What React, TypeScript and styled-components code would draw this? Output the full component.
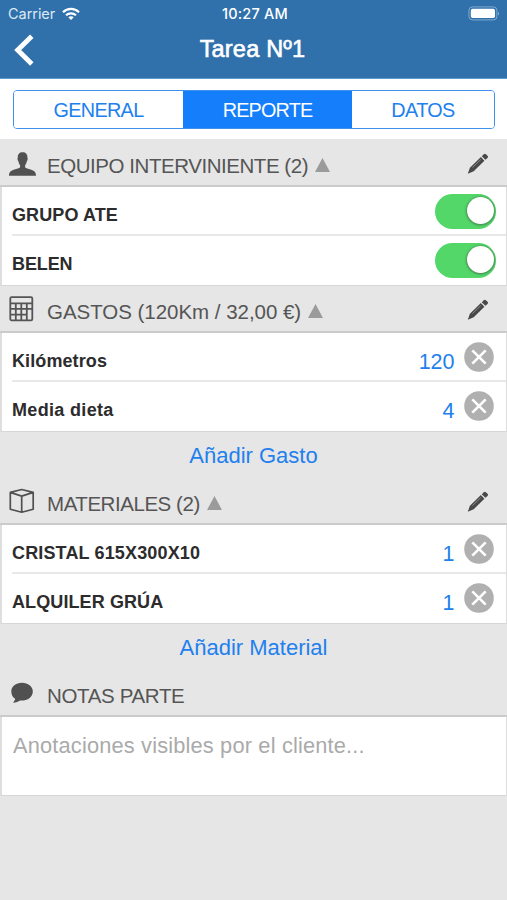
import React from "react";
import styled, { createGlobalStyle } from "styled-components";

const GlobalStyle = createGlobalStyle`
  *, *::before, *::after { box-sizing: border-box; }
  html, body { margin: 0; padding: 0; background: #e6e6e6; }
  body { font-family: "Liberation Sans", Arial, sans-serif; }
  button { border: 0; background: none; padding: 0; font: inherit; color: inherit; }
`;

const Screen = styled.main`
  width: 507px;
  height: 900px;
  overflow: hidden;
  display: flex;
  flex-direction: column;
  background: #e6e6e6;
`;

const Header = styled.header`
  height: 79px;
  flex: none;
  background: #3071ac;
  border-bottom: 1px solid #5e9bd0;
  color: #fff;
`;

const StatusBar = styled.div`
  height: 27px;
  padding: 0 7px 0 8px;
  display: grid;
  grid-template-columns: 1fr auto 1fr;
  align-items: center;
  font-family: Inter, sans-serif;
  font-size: 14.5px;
  line-height: 27px;
`;

const Carrier = styled.div`
  display: flex;
  align-items: center;
  gap: 7px;
  color: #dce9f5;
  letter-spacing: -0.05px;
`;

const Clock = styled.div`
  font-weight: 500;
  letter-spacing: 0.2px;
  padding-left: 2px;
`;

const BatterySlot = styled.div`
  display: flex;
  justify-content: flex-end;
`;

const NavBar = styled.div`
  height: 51px;
  padding: 0 14px;
  display: grid;
  grid-template-columns: 40px 1fr 40px;
  align-items: start;
`;

const BackButton = styled.button`
  display: flex;
  padding-top: 7px;
`;

const Title = styled.h1`
  margin: 0;
  padding-right: 2px;
  text-align: center;
  font-size: 23.5px;
  font-weight: 400;
  line-height: 45px;
  letter-spacing: 0.2px;
  -webkit-text-stroke: 0.6px #fff;
`;

const TabArea = styled.div`
  height: 60px;
  flex: none;
  padding: 11px 12px 0 13px;
  background: #fff;
`;

const Tabs = styled.nav`
  height: 39px;
  display: grid;
  grid-template-columns: 169px 169px 1fr;
  border: 1px solid #3e92ee;
  border-radius: 4px;
  overflow: hidden;
`;

const Tab = styled.button<{ $active?: boolean; $spacing: number }>`
  color: ${(p) => (p.$active ? "#fff" : "#2180ee")};
  background: ${(p) => (p.$active ? "#147efb" : "#fff")};
  font-size: 19.8px;
  line-height: 38px;
  letter-spacing: ${(p) => p.$spacing}px;
`;

const SectionHead = styled.div<{ $height: number }>`
  height: ${(p) => p.$height}px;
  flex: none;
  padding: 0 18px 4px 9px;
  display: flex;
  align-items: flex-end;
  border-bottom: 2px solid #cbcbcb;
  color: #555;
`;

const HeadIcon = styled.span`
  width: 38px;
  height: 36px;
  flex: none;
`;

const SectionTitle = styled.h2<{ $spacing: number }>`
  margin: 0;
  height: 36px;
  font-size: 20.5px;
  font-weight: 400;
  line-height: 42px;
  white-space: nowrap;
  letter-spacing: ${(p) => p.$spacing}px;
`;

const Caret = styled.svg`
  width: 15px;
  height: 36px;
  margin-left: 7px;
`;

const EditButton = styled.button`
  margin-left: auto;
  height: 36px;
`;

const List = styled.ul`
  margin: 0;
  padding: 0 0 0 10px;
  list-style: none;
  flex: none;
  background: #fff;
  border-left: 2px solid #dedede;
  border-right: 1px solid #dedede;
  border-bottom: 1px solid #d6d6d6;
`;

const Row = styled.li`
  height: 49px;
  padding-right: 10px;
  display: flex;
  align-items: flex-start;
  border-bottom: 2px solid #e8e8e8;
  &:last-child { border-bottom: 0; }
`;

const RowLabel = styled.span<{ $spacing: number }>`
  flex: 1;
  color: #2c2c2c;
  font-size: 18px;
  font-weight: 700;
  line-height: 56px;
  letter-spacing: ${(p) => p.$spacing}px;
`;

const Amount = styled.span`
  color: #2180ee;
  font-size: 21.5px;
  line-height: 58px;
  margin-right: 9px;
`;

const Toggle = styled.button`
  width: 61px;
  height: 35px;
  margin: 7px 0 0;
  padding: 3px 2.5px 0;
  display: flex;
  justify-content: flex-end;
  border-radius: 18px;
  background: #53d769;
`;

const Knob = styled.span`
  width: 27px;
  height: 27px;
  border-radius: 50%;
  background: #fff;
  box-shadow: 0 0.5px 2px 1px rgba(60, 90, 65, 0.55);
`;

const RemoveButton = styled.button`
  display: flex;
  margin: 9px 2.5px 0 0;
`;

const AddButton = styled.button<{ $spacing: number }>`
  height: 47px;
  flex: none;
  color: #2180ee;
  font-size: 22px;
  line-height: 47px;
  letter-spacing: ${(p) => p.$spacing}px;
`;

const Notes = styled.div`
  height: 79px;
  flex: none;
  padding-left: 11px;
  background: #fff;
  border-left: 2px solid #dedede;
  border-right: 1px solid #dedede;
  border-bottom: 1px solid #d6d6d6;
  color: #aaa;
  font-size: 21.8px;
  line-height: 58px;
  letter-spacing: 0.17px;
`;

const WifiIcon = () => (
  <svg width="18" height="14" viewBox="0 0 18 14" fill="none" stroke="#fff" strokeWidth="2.2">
    <path d="M1 5.2C5.5.7 12.5.7 17 5.2" />
    <path d="M4 8.3C6.8 5.6 11.2 5.6 14 8.3" />
    <path d="M9 13 6.3 10.2C7.8 8.9 10.2 8.9 11.7 10.2Z" fill="#fff" stroke="none" />
  </svg>
);

const BatteryIcon = () => (
  <svg width="32" height="15" viewBox="0 0 32 15">
    <rect x=".9" y=".9" width="28" height="13" rx="3.5" fill="none" stroke="#83aacf" />
    <rect x="2.8" y="2.8" width="24.2" height="9.2" rx="1.8" fill="#fff" />
    <path d="M30 5.4Q31.6 7.4 30 9.4Z" fill="#9cbddc" />
  </svg>
);

const BackIcon = () => (
  <svg width="21" height="33" viewBox="0 0 21 33">
    <path d="M17.8 2.2 3.7 16 17.8 30" fill="none" stroke="#fff" strokeWidth="4.9" />
  </svg>
);

const PersonIcon = () => (
  <svg width="28" height="36" viewBox="0 0 28 36" fill="#515151">
    <path d="M13.6 7.2C10.4 7.2 8.6 9.2 8.8 12.4C8.2 13.2 8.6 15.5 9.4 16.2C9.7 18.2 10.4 19.4 11.1 20.2V22.2C10.3 23.4 8 23.6 4.8 24.7C1.3 25.9.1 27.2 0 30.8H27C26.9 27.2 25.7 25.9 22.2 24.7C19 23.6 16.9 23.4 16.1 22.2V20.2C16.8 19.4 17.5 18.2 17.8 16.2C18.6 15.5 19 13.2 18.4 12.4C18.6 9.2 16.8 7.2 13.6 7.2Z" />
  </svg>
);

const CalculatorIcon = () => (
  <svg width="28" height="36" viewBox="0 0 28 36" fill="none" stroke="#555" strokeWidth="1.8">
    <rect x="1.3" y="6.1" width="22" height="23.2" rx="1.3" />
    <path d="M1 12.4H23M1 17.9H23M1 23.6H17.8M6.8 12.4V29.4M12.3 12.4V29.4M17.8 12.4V29.4" />
  </svg>
);

const BoxIcon = () => (
  <svg width="28" height="36" viewBox="0 0 28 36" fill="none" stroke="#505050" strokeWidth="1.7" strokeLinejoin="round">
    <path d="M1.3 9.4 12.7 6.5 24.2 9.4V26.3L12.7 29.2 1.3 26.3ZM1.3 9.4 12.7 13.1 24.2 9.4M12.7 13.1V29.2" />
  </svg>
);

const BubbleIcon = () => (
  <svg width="28" height="36" viewBox="0 0 28 36" fill="#505050">
    <path d="M13 7.7C6.8 7.7 2.3 11.3 2.3 16.4C2.3 19.9 4 22.4 6.2 23.8C6 25.3 5.1 26.5 4 27.7C7.1 27.5 9.4 26.6 11.1 25.5C18 26 23.8 22.4 23.8 16.4C23.8 11.3 19 7.7 13 7.7Z" />
  </svg>
);

const PencilIcon = () => (
  <svg width="22" height="36" viewBox="0 0 22 36">
    <path d="M.8 28.7 2.9 22.7 13.9 12.1 17.4 15.7 6.7 26.3Z" fill="#484848" />
    <path d="M14.8 11.2 16.8 9.2C17.5 8.5 18.2 8.5 18.9 9.2L20.5 10.8C21.2 11.5 21.2 12.2 20.5 12.9L18.4 14.8Z" fill="#484848" />
    <path d="M5.5 22.5 13.9 14.4" stroke="#999" strokeWidth=".8" />
  </svg>
);

const RemoveIcon = () => (
  <svg width="30" height="30" viewBox="0 0 30 30">
    <circle cx="15" cy="15" r="14.8" fill="#b0b0b0" />
    <path d="M8.3 8.3 21.7 21.7M21.7 8.3 8.3 21.7" stroke="#fff" strokeWidth="2.6" />
  </svg>
);

interface SectionProps {
  title: string;
  icon: React.ReactNode;
  height: number;
  spacing: number;
  editable?: boolean;
}

const Section = ({ title, icon, height, spacing, editable }: SectionProps) => (
  <SectionHead $height={height}>
    <HeadIcon>{icon}</HeadIcon>
    <SectionTitle $spacing={spacing}>{title}</SectionTitle>
    {editable && (
      <>
        <Caret viewBox="0 0 15 36">
          <path d="M7.5 13 15 27H0Z" fill="#9b9b9b" />
        </Caret>
        <EditButton aria-label="Editar"><PencilIcon /></EditButton>
      </>
    )}
  </SectionHead>
);

const ItemRow = ({ label, amount, spacing }: { label: string; amount: number; spacing: number }) => (
  <Row>
    <RowLabel $spacing={spacing}>{label}</RowLabel>
    <Amount>{amount}</Amount>
    <RemoveButton aria-label="Eliminar"><RemoveIcon /></RemoveButton>
  </Row>
);

const MemberRow = ({ label, spacing }: { label: string; spacing: number }) => (
  <Row>
    <RowLabel $spacing={spacing}>{label}</RowLabel>
    <Toggle role="switch" aria-checked aria-label={label}><Knob /></Toggle>
  </Row>
);

export default function App() {
  return (
    <Screen>
      <GlobalStyle />
      <Header>
        <StatusBar>
          <Carrier>Carrier<WifiIcon /></Carrier>
          <Clock>10:27 AM</Clock>
          <BatterySlot><BatteryIcon /></BatterySlot>
        </StatusBar>
        <NavBar>
          <BackButton aria-label="Atrás"><BackIcon /></BackButton>
          <Title>Tarea Nº1</Title>
        </NavBar>
      </Header>
      <TabArea>
        <Tabs>
          <Tab $spacing={-0.65}>GENERAL</Tab>
          <Tab $active $spacing={-0.8}>REPORTE</Tab>
          <Tab $spacing={-0.6}>DATOS</Tab>
        </Tabs>
      </TabArea>
      <Section title="EQUIPO INTERVINIENTE (2)" icon={<PersonIcon />} height={48} spacing={-0.45} editable />
      <List>
        <MemberRow label="GRUPO ATE" spacing={0.1} />
        <MemberRow label="BELEN" spacing={-0.1} />
      </List>
      <Section title="GASTOS (120Km / 32,00 €)" icon={<CalculatorIcon />} height={47} spacing={-0.03} editable />
      <List>
        <ItemRow label="Kilómetros" amount={120} spacing={0.1} />
        <ItemRow label="Media dieta" amount={4} spacing={0.33} />
      </List>
      <AddButton $spacing={0}>Añadir Gasto</AddButton>
      <Section title="MATERIALES (2)" icon={<BoxIcon />} height={46} spacing={-0.45} editable />
      <List>
        <ItemRow label="CRISTAL 615X300X10" amount={1} spacing={0.15} />
        <ItemRow label="ALQUILER GRÚA" amount={1} spacing={0.1} />
      </List>
      <AddButton $spacing={0}>Añadir Material</AddButton>
      <Section title="NOTAS PARTE" icon={<BubbleIcon />} height={46} spacing={-0.35} />
      <Notes>Anotaciones visibles por el cliente...</Notes>
    </Screen>
  );
}
